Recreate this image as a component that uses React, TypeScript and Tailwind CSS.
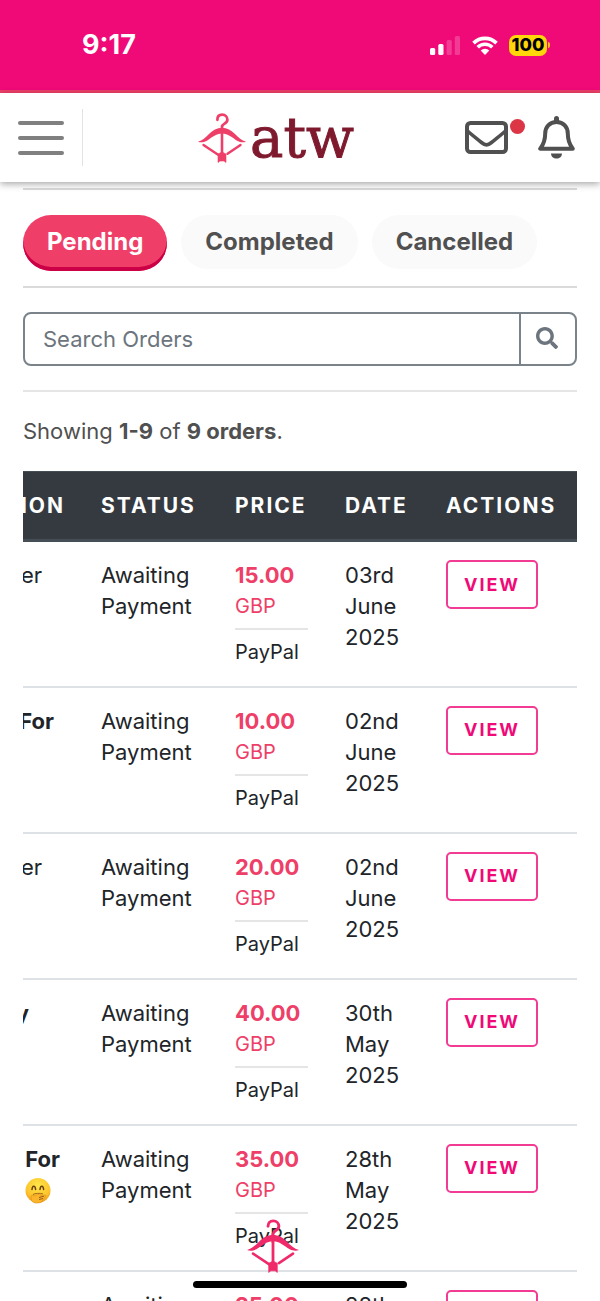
import { useState } from "react";
import { FaSearch } from "react-icons/fa";

type Order = {
  item: string;
  itemClass: string;
  emoji?: boolean;
  price: string;
  date: string[];
};

const ORDERS: Order[] = [
  { item: "er", itemClass: "pr-10", price: "15.00", date: ["03rd", "June", "2025"] },
  { item: "For", itemClass: "pr-7 font-bold", price: "10.00", date: ["02nd", "June", "2025"] },
  { item: "er", itemClass: "pr-10", price: "20.00", date: ["02nd", "June", "2025"] },
  { item: "y", itemClass: "pr-[53px] font-bold", price: "40.00", date: ["30th", "May", "2025"] },
  { item: "For", itemClass: "pr-[22px] font-bold", emoji: true, price: "35.00", date: ["28th", "May", "2025"] },
  { item: "", itemClass: "pr-[22px]", price: "25.00", date: ["28th", "May", "2025"] },
];

const TABS = ["Pending", "Completed", "Cancelled"];

const BowIcon = ({ className }: { className: string }) => (
  <svg viewBox="0 0 48 50" className={className} fill="none" aria-hidden="true">
    <path d="M19.400 6.800C19.400 3.600 21.400 1.700 24.200 1.700c3 0 5.200 2.200 5.200 5.100 0 4-5.200 3.600-5.400 7V17" stroke="currentColor" strokeWidth="2.700" strokeLinecap="round" />
    <path d="M0 28.700c4.500-1.200 7.500-4.200 11-7.700C14.700 17.200 19 14.700 24 14.700s9.300 2.500 13 6.300c3.500 3.500 6.500 6.500 11 7.700-2 .9-5.500 1-8.500-.7C34 24.500 30 20.500 24 20.500S14 24.500 8.500 28C5.500 29.700 2 29.600 0 28.700Z" fill="currentColor" />
    <path d="M24 20v22" stroke="currentColor" strokeWidth="2.600" />
    <path d="M5.500 32 20.500 42M42.500 32 29.500 40.800" stroke="currentColor" strokeWidth="2.400" strokeLinecap="round" />
    <path d="M24 39 28 41v8.500L26 48h-4l-2 1.500V41Z" fill="currentColor" stroke="currentColor" strokeWidth="0.600" />
  </svg>
);

const GiggleFace = () => (
  <svg viewBox="0 0 26 26" className="w-[26px] h-[31px]" role="img" aria-label="🤭">
    <defs>
      <radialGradient id="face" cx="0.5" cy="0.3" r="0.75">
        <stop offset="0" stopColor="#ffe64a" />
        <stop offset="0.65" stopColor="#fdc52c" />
        <stop offset="1" stopColor="#ee9018" />
      </radialGradient>
    </defs>
    <circle cx="13" cy="13" r="12.500" fill="url(#face)" />
    <path d="M7 12c.4-4.200 3.200-4.200 3.600 0M15 12c.4-4.200 3.200-4.200 3.600 0" stroke="#6b3f10" strokeWidth="1.500" fill="none" strokeLinecap="round" />
    <path d="M8 17c2-1.300 7-1.500 10-.6" stroke="#a8651a" strokeWidth="1" fill="none" />
    <path d="M6 19.500c0-2 1.500-2.500 2.800-1.200l6-1.800c1.500-.2 1.700 1 .7 1.600l4.200-.6c1.600 0 1.600 1.500.3 2l-3 4.200c-2.500 2.500-8.500 2.700-10.500-.7Z" fill="#fcb52a" stroke="#d98f1e" strokeWidth="0.600" />
    <path d="m14 20 5-1.300M14 22l4-1" stroke="#8a5210" strokeWidth="0.900" />
  </svg>
);

const StatusBar = () => (
  <div className="flex items-center justify-between h-[93px] shrink-0 border-b-3 border-[#ee3f69] bg-[#ef0a78] pl-[82px] pr-[50px] text-white">
    <span className="text-[27px] font-bold leading-8">9:17</span>
    <div className="flex items-center">
      <svg viewBox="0 0 30 19" className="w-[30px] h-[19px] mr-3" fill="white" aria-hidden="true">
        <rect x="0" y="12" width="5.200" height="7" rx="1.500" />
        <rect x="8.300" y="8" width="5.200" height="11" rx="1.500" />
        <rect x="16.600" y="4" width="5.200" height="15" rx="1.500" opacity="0.200" />
        <rect x="24.800" y="0" width="5.200" height="19" rx="1.500" opacity="0.200" />
      </svg>
      <svg viewBox="0 0 26 19" className="w-[26px] h-[19px] mr-[11px]" aria-hidden="true">
        <g fill="none" stroke="white" strokeWidth="3.600">
          <path d="M1.500 7.100a16.300 16.300 0 0 1 23 0" />
          <path d="M5.700 11.300a10.400 10.400 0 0 1 14.600 0" />
        </g>
        <path d="M8.700 14.600a6.200 6.200 0 0 1 8.600 0L13 19Z" fill="white" />
      </svg>
      <span className="flex items-center justify-center w-[38px] h-[21px] rounded-[7px] bg-[#ffd60a] text-lg leading-5 font-extrabold text-black">
        100
      </span>
      <span className="w-[2px] h-[6px] ml-px rounded-r-full bg-[#ffb82a]" />
    </div>
  </div>
);

const Header = () => (
  <header className="relative z-10 flex items-center justify-between h-[89px] shrink-0 bg-white pl-[18px] pr-[25px] shadow-[0_2px_7px_rgba(0,0,0,0.35)]">
    <div className="flex items-center">
      <button type="button" aria-label="Menu" className="flex flex-col gap-[11px]">
        <span className="w-[46px] h-1 rounded-full bg-[#808080]" />
        <span className="w-[46px] h-1 rounded-full bg-[#808080]" />
        <span className="w-[46px] h-1 rounded-full bg-[#808080]" />
      </button>
      <span className="w-px h-[57px] ml-[18px] bg-[#e2e2e2]" />
    </div>
    <a href="#home" className="flex items-center pl-1">
      <BowIcon className="w-12 h-[50px] text-[#ee3f69]" />
      <span className="ml-1 font-['DejaVu_Serif',serif] text-[56px] leading-[64px] text-[#7f1a2e] [-webkit-text-stroke:1px_#7f1a2e]">
        atw
      </span>
    </a>
    <div className="flex items-center text-[#505050]">
      <button type="button" aria-label="Messages" className="relative mr-[30px]">
        <svg viewBox="0 0 43 33" className="w-[43px] h-[33px]" fill="none" stroke="currentColor" strokeWidth="4" aria-hidden="true">
          <rect x="2" y="2" width="39" height="29" rx="3.500" />
          <path d="M2 9.500c5 4.500 10 8.300 14.500 12 4 3.200 6 3.200 10 0C31 17.800 36 14 41 9.500" strokeWidth="3.600" />
        </svg>
        <span className="absolute -top-[2px] -right-[17px] w-[15px] h-[15px] rounded-full bg-[#dc3545]" />
      </button>
      <button type="button" aria-label="Notifications">
        <svg viewBox="0 0 37 43" className="w-[37px] h-[43px]" aria-hidden="true">
          <path d="M18.500 6C11.500 6 7.200 11.200 7.200 17.500c0 8-2 11.500-5 15.200h32.600c-3-3.700-5-7.200-5-15.200C29.800 11.200 25.500 6 18.500 6Z" fill="none" stroke="currentColor" strokeWidth="4" strokeLinejoin="round" />
          <path d="M18.500 2.500v3" stroke="currentColor" strokeWidth="5" strokeLinecap="round" />
          <path d="M13 37.500h11c0 3-2.500 5-5.500 5s-5.500-2-5.500-5Z" fill="currentColor" />
        </svg>
      </button>
    </div>
  </header>
);

const OrderRow = ({ order }: { order: Order }) => (
  <tr className="h-[146px] border-b-2 border-[#dee2e6] align-top">
    <td className="pt-[18px]">
      <div className={`flex justify-end overflow-hidden ${order.itemClass}`}>
        <div>
          {order.item}
          {order.emoji && <GiggleFace />}
        </div>
      </div>
    </td>
    <td className="px-[19px] pt-[18px]">Awaiting Payment</td>
    <td className="pl-[19px] pr-[18px] pt-[18px]">
      <span className="block font-bold text-[#ee3f69]">{order.price}</span>
      <span className="block text-xl leading-[31px] text-[#ee3f69]">GBP</span>
      <hr className="mt-[6px] mb-[7px] border-t-2 border-[#e5e5e5]" />
      <span className="block text-xl leading-[31px]">PayPal</span>
    </td>
    <td className="px-[19px] pt-[18px]">
      {order.date.map((part) => (
        <span key={part} className="block">{part}</span>
      ))}
    </td>
    <td className="px-[19px] pt-[18px]">
      <button type="button" className="w-[92px] h-[49px] border-2 border-[#ef0a78]/80 rounded-[5px] text-lg font-bold tracking-[2px] text-[#ef0a78]">
        VIEW
      </button>
    </td>
  </tr>
);

export default function App() {
  const [tab, setTab] = useState("Pending");
  const [query, setQuery] = useState("");

  return (
    <div className="relative flex flex-col h-screen overflow-hidden bg-white font-[Inter,sans-serif] text-[22px] leading-[31px] text-[#212529]">
      <StatusBar />
      <Header />

      <main className="flex-1 min-h-0 px-[23px] pt-[6px] overflow-hidden">
        <nav className="flex gap-[14px] border-y-2 border-[#dadada] h-[100px] pt-[25px]">
          {TABS.map((name) => (
            <button
              key={name}
              type="button"
              onClick={() => setTab(name)}
              className={`px-6 rounded-full text-2xl font-bold ${
                name === tab
                  ? "h-14 pb-0.5 bg-[#ef3f69] text-white shadow-[inset_0_-4px_0_#cb0046]"
                  : "h-[54px] bg-[#fafafa] text-[#505050]"
              }`}
            >
              {name}
            </button>
          ))}
        </nav>

        <form
          onSubmit={(e) => e.preventDefault()}
          className="flex h-[54px] mt-6 border-2 border-[#6c757d]/90 rounded-lg overflow-hidden"
        >
          <input
            type="text"
            aria-label="Search Orders"
            placeholder="Search Orders"
            value={query}
            onChange={(e) => setQuery(e.target.value)}
            className="flex-1 min-w-0 px-[18px] placeholder:text-[#6c757d] focus:outline-none"
          />
          <button type="submit" aria-label="Search" className="flex items-center justify-center w-14 pb-0.5 pr-0.5 border-l-2 border-[#6c757d]/90 text-[#6c757d]">
            <FaSearch className="w-[22px] h-[22px]" />
          </button>
        </form>

        <hr className="mt-6 border-t-2 border-[#e5e5e5]" />

        <p className="mt-6 text-[#505050]">
          Showing <strong>1-9</strong> of <strong>9 orders</strong>.
        </p>

        <table className="w-full mt-6 table-fixed border-collapse">
          <colgroup>
            <col className="w-[59px]" />
            <col className="w-[134px]" />
            <col className="w-[110px]" />
            <col className="w-[101px]" />
            <col />
          </colgroup>
          <thead>
            <tr className="h-[69px] border-t border-b-3 border-[#454d55] bg-[#343a40] text-left text-[21px] tracking-[2px] text-white">
              <th>
                <div className="flex justify-end pr-[17px] overflow-hidden">ION</div>
              </th>
              <th className="px-[19px]">STATUS</th>
              <th className="px-[19px]">PRICE</th>
              <th className="px-[19px]">DATE</th>
              <th className="pl-[19px]">ACTIONS</th>
            </tr>
          </thead>
          <tbody>
            {ORDERS.map((order, i) => (
              <OrderRow key={i} order={order} />
            ))}
          </tbody>
        </table>
      </main>

      <div className="absolute inset-x-0 bottom-[13px] flex flex-col items-center gap-2 pointer-events-none">
        <BowIcon className="w-[54px] h-[54px] mr-[54px] text-[#f02a6a]" />
        <span className="w-[214px] h-[7px] rounded-full bg-black" />
      </div>
    </div>
  );
}
